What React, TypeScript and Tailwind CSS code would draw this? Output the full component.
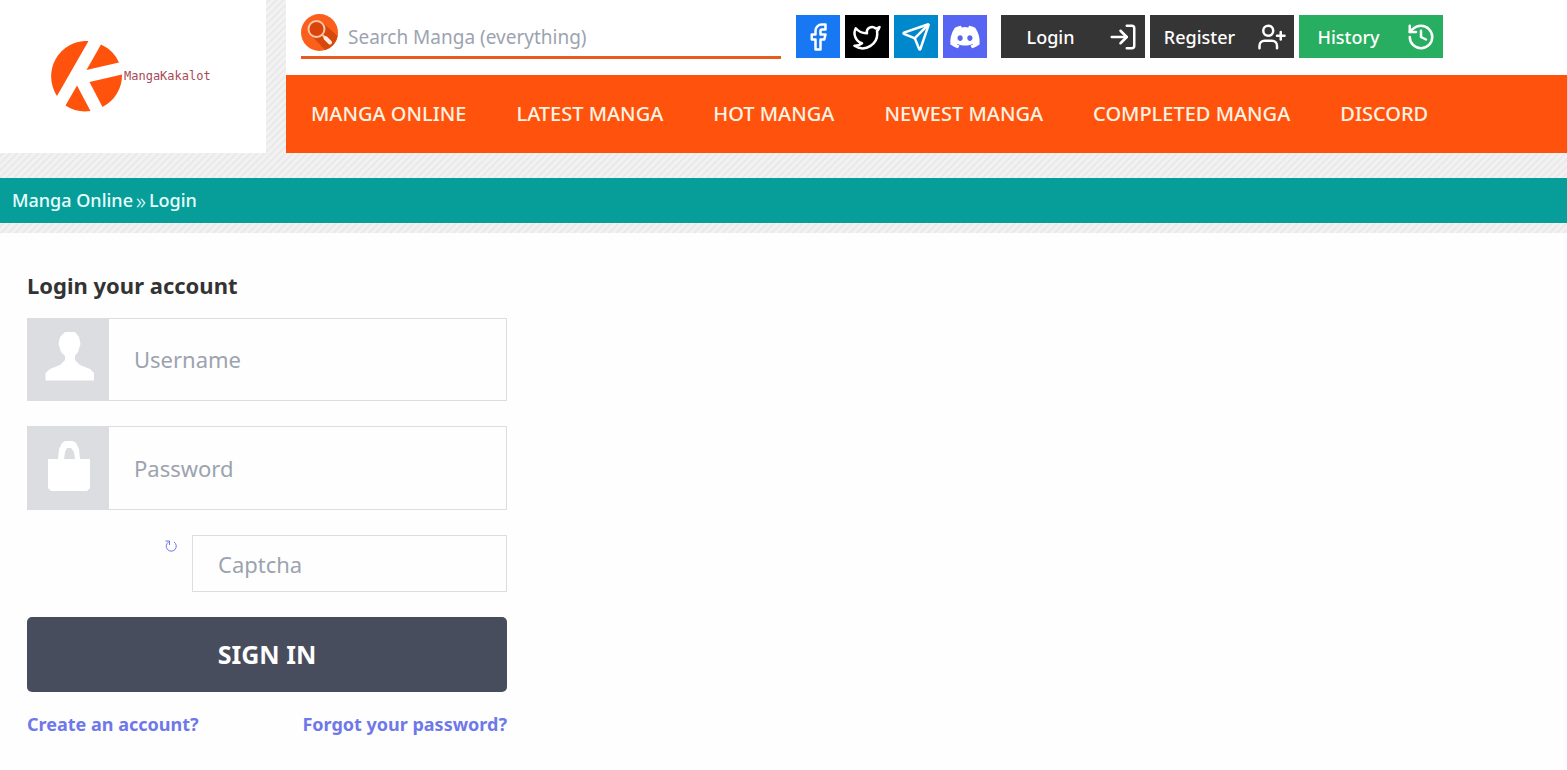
import { Facebook, History, LogIn, Send, Twitter, UserPlus } from "lucide-react";
import { FaDiscord } from "react-icons/fa";

const menu = [
  "Manga Online",
  "Latest Manga",
  "Hot Manga",
  "Newest Manga",
  "Completed Manga",
  "Discord",
];

function Logo() {
  return (
    <svg viewBox="0 0 160 72" className="w-40 h-[72px]" role="img" aria-label="MangaKakalot">
      <g fill="#ff530d">
        <path d="M37.500 0A35.500 35.500 0 0 0 6 55Z" />
        <path d="M50 3.500A35.500 35.500 0 0 1 68 21.500L35.500 29Z" />
        <path d="M71 33.500A35.500 35.500 0 0 1 51.500 66L38.500 41Z" />
        <path d="M26 44.500L39.500 70A35.500 35.500 0 0 1 14.500 64.500Z" />
      </g>
      <text x="73" y="39" fontSize="12" fill="#a84a55" fontFamily="DejaVu Sans Mono, monospace">
        MangaKakalot
      </text>
    </svg>
  );
}

function SearchIcon() {
  return (
    <svg viewBox="0 0 37 37" className="w-[37px] h-[37px]">
      <circle cx="18.500" cy="18.500" r="18.500" fill="#fb5f1c" />
      <path d="M22 9L36.700 22A18.500 18.500 0 0 1 24 36L10 21Z" fill="#d8480d" />
      <circle cx="15.500" cy="15" r="8" fill="#d9440b" stroke="#fbc6a8" strokeWidth="2" />
      <path d="M21.500 21L24 23.500" stroke="#fbc6a8" strokeWidth="2" />
      <path d="M24.500 24L29 28.500" stroke="#fdeee4" strokeWidth="4" strokeLinecap="round" />
    </svg>
  );
}

function UserIcon() {
  return (
    <svg viewBox="0 0 50 50" className="w-[50px] h-[50px]" fill="#fff">
      <path d="M20 1H30L34 6L35.500 13L33 21L30 25V29L35 34L45 38L49 42V49.500H0.500V42L5 38L15 34L20 29V25L16 21L13.500 13L15 6Z" />
    </svg>
  );
}

function LockIcon() {
  return (
    <svg viewBox="0 0 50 52" className="w-[50px] h-[52px]" fill="#fff">
      <path d="M3 20H13L14 10L17 4L20 2H28L31 4L34 10L35 20H45V49L42 52H6L3 49ZM19 20H30L29 13L26 9H22L20 13Z" fillRule="evenodd" />
    </svg>
  );
}

function ReloadIcon() {
  return (
    <svg viewBox="0 0 12 12" className="size-3" fill="none" stroke="#6b74e6">
      <path d="M0.500 1H4.500V5M3.500 2A5 5 0 1 0 9 2" />
    </svg>
  );
}

export default function App() {
  return (
    <div className="min-h-screen bg-[#fefefe] font-['Noto_Sans',sans-serif] text-[#333]">
      <div className="bg-[repeating-linear-gradient(135deg,#e9e9e9_0px,#e9e9e9_1px,#f2f2f2_2px,#f2f2f2_4px,#e9e9e9_5px)] pb-[10px]">
        <header className="flex gap-5">
          <a href="/" className="w-[266px] shrink-0 bg-white flex items-center justify-center pr-[5px]">
            <Logo />
          </a>
          <div className="grow">
            <div className="h-[75px] bg-white flex items-start pl-[15px] pt-[14px]">
              <form className="flex items-start gap-2 w-[480px] h-[45px] border-b-3 border-[#e85a20]">
                <button type="submit" aria-label="Search">
                  <SearchIcon />
                </button>
                <input
                  type="text"
                  aria-label="Search Manga"
                  placeholder="Search Manga (everything)"
                  className="grow h-[42px] px-0.5 pt-1 text-[19px] placeholder:text-[#9ca3af] outline-none"
                />
              </form>
              <div className="flex gap-[5px] ml-[15px] mt-px text-white">
                <a href="#facebook" aria-label="Facebook" className="w-11 h-[43px] bg-[#1877f2] flex items-center justify-center">
                  <Facebook size={30} />
                </a>
                <a href="#twitter" aria-label="Twitter" className="w-11 h-[43px] bg-black flex items-center justify-center">
                  <Twitter size={30} />
                </a>
                <a href="#telegram" aria-label="Telegram" className="w-11 h-[43px] bg-[#0088cc] flex items-center justify-center">
                  <Send size={30} />
                </a>
                <a href="#discord" aria-label="Discord" className="w-11 h-[43px] bg-[#5865f2] flex items-center justify-center">
                  <FaDiscord size={32} />
                </a>
              </div>
              <div className="flex gap-[5px] ml-[14px] mt-px text-white text-lg font-medium">
                <a href="#login" className="w-36 h-[43px] bg-[#353535] flex items-center gap-2 pr-[7px]">
                  <span className="grow text-center">Login</span>
                  <LogIn size={30} />
                </a>
                <a href="#register" className="w-36 h-[43px] bg-[#353535] flex items-center gap-2 pr-[7px]">
                  <span className="grow text-center">Register</span>
                  <UserPlus size={30} />
                </a>
                <a href="#history" className="w-36 h-[43px] bg-[#27ae60] flex items-center gap-2 pr-[7px]">
                  <span className="grow text-center">History</span>
                  <History size={30} />
                </a>
              </div>
            </div>
            <nav className="h-[78px] bg-[#ff530d] flex items-center gap-[50px] px-[25px] text-xl font-medium text-[#fff3e4] uppercase">
              {menu.map((item) => (
                <a key={item} href="#menu" className="whitespace-nowrap">
                  {item}
                </a>
              ))}
            </nav>
          </div>
        </header>
        <div className="mt-[25px] h-[45px] bg-[#079e9a] flex items-center gap-[3px] px-3 pb-0.5 text-lg font-medium text-[#e9fffd]">
          <a href="#home">Manga Online</a>
          <span className="text-[22px] leading-none font-light">»</span>
          <a href="#login">Login</a>
        </div>
      </div>
      <main className="px-[27px] pt-[35px]">
        <form className="w-[480px]">
          <h1 className="text-[22px] leading-[34px] font-bold">Login your account</h1>
          <div className="mt-4 flex h-[83px] border border-[#dcdde0]">
            <label htmlFor="username" aria-label="Username" className="w-[81px] bg-[#dcdde0] flex justify-center pt-3 pl-0.5">
              <UserIcon />
            </label>
            <input
              id="username"
              type="text"
              placeholder="Username"
              className="grow px-[25px] text-[22px] placeholder:text-[#9ca3af] outline-none"
            />
          </div>
          <div className="mt-[25px] flex h-[84px] border border-[#dcdde0]">
            <label htmlFor="password" aria-label="Password" className="w-[81px] bg-[#dcdde0] flex justify-center pt-3 pl-0.5">
              <LockIcon />
            </label>
            <input
              id="password"
              type="password"
              placeholder="Password"
              className="grow px-[25px] text-[22px] placeholder:text-[#9ca3af] outline-none"
            />
          </div>
          <div className="mt-[25px] flex justify-end items-start gap-[15px]">
            <button type="button" aria-label="Reload captcha" className="pt-[5px]">
              <ReloadIcon />
            </button>
            <input
              type="text"
              aria-label="Captcha"
              placeholder="Captcha"
              className="w-[315px] h-[57px] border border-[#dcdde0] px-[25px] text-[22px] placeholder:text-[#9ca3af] outline-none"
            />
          </div>
          <button type="submit" className="mt-[25px] w-full h-[75px] rounded-[5px] bg-[#484d5e] text-white text-[25px] font-bold">
            SIGN IN
          </button>
          <div className="mt-[18px] flex justify-between text-lg font-bold text-[#6e78ea]">
            <a href="#create">Create an account?</a>
            <a href="#forgot">Forgot your password?</a>
          </div>
        </form>
      </main>
    </div>
  );
}
